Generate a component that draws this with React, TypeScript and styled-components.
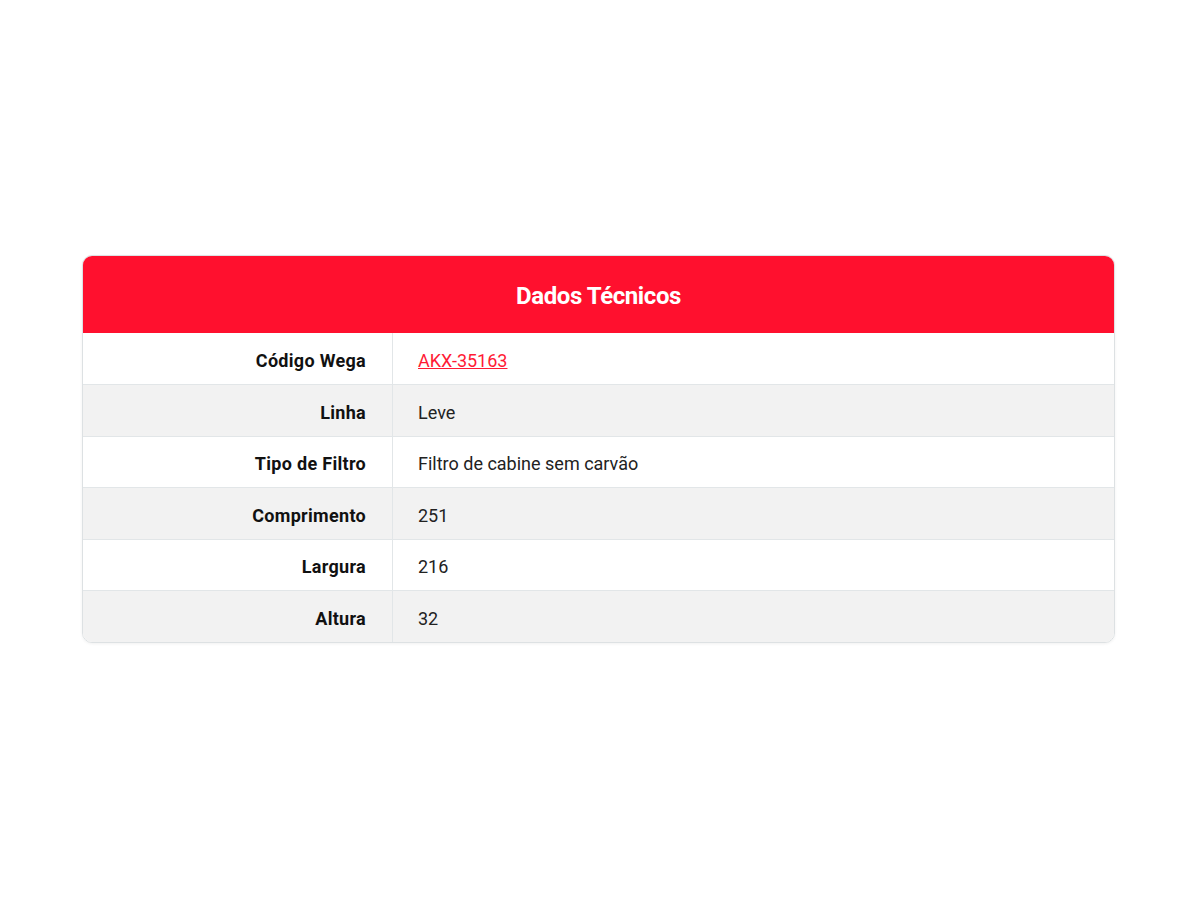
import styled, { createGlobalStyle } from "styled-components";

const rows = [
  { label: "Código Wega", value: "AKX-35163", link: true },
  { label: "Linha", value: "Leve" },
  { label: "Tipo de Filtro", value: "Filtro de cabine sem carvão" },
  { label: "Comprimento", value: "251" },
  { label: "Largura", value: "216" },
  { label: "Altura", value: "32" },
];

const App = () => {
  return (
    <Page>
      <GlobalStyle />
      <Card>
        <Header>Dados Técnicos</Header>
        <Table>
          <tbody>
            {rows.map((row, i) => (
              <Row key={row.label} striped={i % 2 === 1}>
                <Label>{row.label}</Label>
                <Value>
                  {row.link ? <CodeLink href="#">{row.value}</CodeLink> : row.value}
                </Value>
              </Row>
            ))}
          </tbody>
        </Table>
      </Card>
    </Page>
  );
};

export default App;

const GlobalStyle = createGlobalStyle`
  html, body {
    margin: 0;
    padding: 0;
    background: #ffffff;
    font-family: Roboto, "Liberation Sans", sans-serif;
  }
`;

const Page = styled.div`
  height: 900px;
  display: flex;
  align-items: center;
  justify-content: center;
  box-sizing: border-box;
`;

const Card = styled.div`
  width: 1031px;
  margin-left: -3px;
  margin-top: -2px;
  border: 1px solid #dde1e3;
  border-radius: 10px;
  overflow: hidden;
  box-shadow: 0 1px 3px rgba(0, 0, 0, 0.06);
`;

const Header = styled.div`
  height: 77px;
  padding-top: 2px;
  box-sizing: border-box;
  background: #ff102e;
  color: #ffffff;
  display: flex;
  align-items: center;
  justify-content: center;
  font-size: 24px;
  font-weight: 700;
  letter-spacing: -0.4px;
`;

const Table = styled.table`
  width: 100%;
  border-collapse: collapse;
`;

const Row = styled.tr<{ striped: boolean }>`
  height: 51.5px;
  background: ${({ striped }) => (striped ? "#f2f2f2" : "#ffffff")};
  border-top: 1px solid #e2e6e8;
  &:first-child {
    border-top: none;
  }
`;

const Label = styled.td`
  width: 283px;
  padding: 4px 26px 0 0;
  text-align: right;
  font-weight: 700;
  font-size: 18px;
  color: #111111;
  border-right: 1px solid #e2e6e8;
  letter-spacing: 0.3px;
`;

const Value = styled.td`
  padding: 4px 0 0 25px;
  font-size: 18px;
  color: #222222;
`;

const CodeLink = styled.a`
  color: #ff1a35;
  text-decoration: underline;
`;
